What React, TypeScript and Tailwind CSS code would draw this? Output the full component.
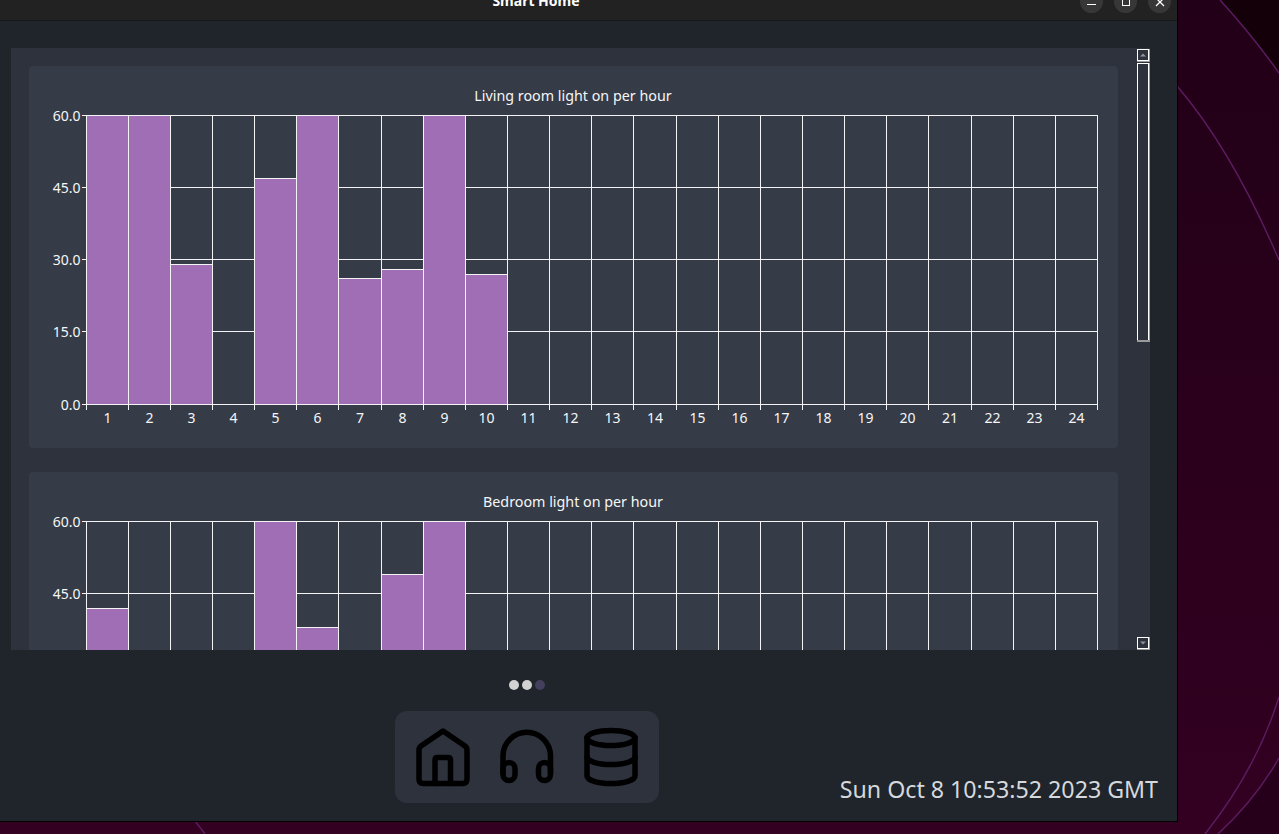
const hours = Array.from({ length: 24 }, (_, i) => i + 1);
const yTicks = [60, 45, 30, 15, 0];
const rowH = 289 / 60;

// pixel columns of the grid, relative to the left of the plot
const gridX = [0, 42, 84, 126, 168, 210, 252, 295, 337, 379, 421, 463, 505, 547, 590, 632, 674, 716, 758, 800, 842, 885, 927, 969, 1011];

const charts = [
  { title: 'Living room light on per hour', values: [60, 60, 29, 0, 47, 60, 26.1, 28, 60, 27] },
  { title: 'Bedroom light on per hour', values: [42, 0, 0, 0, 60, 38, 0, 49, 60] },
];

function HourChart({ title, values }: { title: string; values: number[] }) {
  const xAt = (i: number) => 57.5 + gridX[i];
  const gridY = (v: number) => 49.5 + Math.floor((60 - v) * rowH);
  const barY = (v: number) => 49.5 + Math.round((60 - v) * rowH);

  return (
    <div className="h-[382px] w-[1089px] shrink-0 rounded bg-[#353b47]">
      <svg width="1089" height="382" shapeRendering="crispEdges" className="block font-['Noto_Sans',sans-serif] text-[14px]">
        <text x="544" y="34.5" textAnchor="middle" fill="#f6f6f6" className="text-[14.3px]">
          {title}
        </text>
        {yTicks.map((t) => (
          <g key={t}>
            <line x1={53} x2={1068.5} y1={gridY(t)} y2={gridY(t)} stroke="#f4f4f4" />
            <text x="51.5" y={gridY(t) + 5} textAnchor="end" fill="#f6f6f6">
              {t.toFixed(1)}
            </text>
          </g>
        ))}
        {gridX.map((_, i) => (
          <line key={i} x1={xAt(i)} x2={xAt(i)} y1={49.5} y2={343.5} stroke="#f4f4f4" />
        ))}
        {hours.map((h, i) => (
          <text key={h} x={(xAt(i) + xAt(i + 1)) / 2} y="357" textAnchor="middle" fill="#f6f6f6">
            {h}
          </text>
        ))}
        {values.map((v, i) =>
          v > 0 ? (
            <rect
              key={i}
              x={xAt(i)}
              y={barY(v)}
              width={xAt(i + 1) - xAt(i)}
              height={barY(0) - barY(v)}
              fill="#a06eb4"
              stroke="#f4f4f4"
            />
          ) : null
        )}
      </svg>
    </div>
  );
}

function ScrollArrow({ up }: { up?: boolean }) {
  return (
    <div className="flex h-[13px] w-[13px] justify-start border-r border-b border-[#9a9a9a]">
      <div className="flex h-[12px] w-[12px] items-center justify-center border border-white">
        <svg width="6" height="4" viewBox="0 0 6 4">
          <path d={up ? 'M3 0.5 L6 3.5 H0 Z' : 'M3 3.5 L6 0.5 H0 Z'} fill="#8f939b" />
        </svg>
      </div>
    </div>
  );
}

function Scrollbar() {
  return (
    <div className="flex h-full w-[13px] shrink-0 flex-col pt-px">
      <ScrollArrow up />
      <div className="mt-px flex h-[279px] w-[13px] border-r border-b-2 border-[#9a9a9a]">
        <div className="h-full w-[12px] border border-b-0 border-white" />
      </div>
      <div className="flex-1" />
      <ScrollArrow />
    </div>
  );
}

function HomeIcon() {
  return (
    <svg width="64" height="64" viewBox="0 0 64 64" fill="none" stroke="#000" strokeWidth="5.5" strokeLinecap="round" strokeLinejoin="round">
      <path d="M8 25 Q8 22.5 10 21 L32 6 L54 21 Q56 22.5 56 25 V54 Q56 58.5 52 58.5 H12 Q8 58.5 8 54 Z" />
      <path d="M24 58.5 V35 Q24 32.5 26.5 32.5 H37 Q39.5 32.5 39.5 35 V58.5" />
    </svg>
  );
}

function HeadphonesIcon() {
  return (
    <svg width="64" height="64" viewBox="0 0 64 64" fill="none" stroke="#000" strokeWidth="5.5" strokeLinecap="round" strokeLinejoin="round">
      <path d="M8 48 V31 a23.75 23.75 0 0 1 47.5 0 V48" />
      <rect x="8" y="37.5" width="12" height="18" rx="6" />
      <rect x="43.5" y="37.5" width="12" height="18" rx="6" />
    </svg>
  );
}

function DatabaseIcon() {
  return (
    <svg width="64" height="64" viewBox="0 0 64 64" fill="none" stroke="#000" strokeWidth="5.5" strokeLinecap="round" strokeLinejoin="round">
      <ellipse cx="32" cy="13" rx="24" ry="7.5" />
      <path d="M8 13 V51 A24 7.5 0 0 0 56 51 V13" />
      <path d="M8 32 A24 7.5 0 0 0 56 32" />
    </svg>
  );
}

function Wallpaper() {
  return (
    <svg width="1279" height="834" className="absolute inset-0" fill="none">
      <path d="M1220 0 Q1252 35 1279 73 V0 Z" fill="#130009" />
      <path d="M1218 834 Q1255 800 1279 758 V834 Z" fill="#26001a" />
      <g stroke="#5c1b60" strokeWidth="1.5">
        <path d="M1220 0 Q1252 35 1279 73" />
        <path d="M1177 86 Q1232 150 1279 260" />
        <path d="M1205 834 Q1256 770 1279 697" />
        <path d="M1218 834 Q1255 800 1279 758" />
        <path d="M195 821 L205 834" />
      </g>
    </svg>
  );
}

function WindowButton({ children }: { children: React.ReactNode }) {
  return (
    <div className="-mt-[10px] flex h-[23px] w-[23px] items-end justify-center rounded-full bg-[#373737]">
      {children}
    </div>
  );
}

export default function App() {
  return (
    <div className="relative h-[834px] w-[1279px] overflow-hidden bg-linear-to-b from-[#220017] to-[#330021] font-['Noto_Sans',sans-serif]">
      <Wallpaper />

      {/* app window */}
      <div className="absolute left-0 top-0 flex h-[822px] w-[1178px] flex-col border-b border-r border-black bg-[#1f252b]">
        <div className="relative flex h-[21px] shrink-0 items-start justify-end gap-[11px] overflow-hidden border-b border-[#15181c] bg-[#222222] pr-[6px]">
          <div className="absolute inset-x-0 -top-[9px] pr-[105px] text-center text-[14px] font-bold leading-[20px] text-white">Smart Home</div>
          <WindowButton>
            <div className="mb-[8px] h-[1.5px] w-[9px] bg-white" />
          </WindowButton>
          <WindowButton>
            <div className="mb-[7px] h-[9px] w-[8px] border border-white" />
          </WindowButton>
          <WindowButton>
            <svg width="10" height="10" viewBox="0 0 10 10" className="mb-[6px]" stroke="#fff" strokeWidth="1.3">
              <path d="M1 1 L9 9 M9 1 L1 9" />
            </svg>
          </WindowButton>
        </div>

        <div className="ml-[11px] mt-[27px] flex h-[602px] w-[1139px] shrink-0 bg-[#2d323d]">
          <div className="flex h-full w-[1126px] flex-col gap-[24px] overflow-hidden pl-[18px] pt-[18px]">
            {charts.map((c) => (
              <HourChart key={c.title} title={c.title} values={c.values} />
            ))}
          </div>
          <Scrollbar />
        </div>

        <div className="mt-[30px] flex w-[1054px] justify-center gap-[3.4px]">
          <div className="h-[10px] w-[10px] rounded-full bg-[#d2d2d2]" />
          <div className="h-[10px] w-[10px] rounded-full bg-[#d2d2d2]" />
          <div className="h-[10px] w-[10px] rounded-full bg-[#453f5e]" />
        </div>

        <div className="mt-[21px] flex items-end justify-between pl-[395px] pr-[19px]">
          <div className="flex h-[92px] w-[264px] items-center gap-[20px] rounded-xl bg-[#2d323d] px-[16px]">
            <HomeIcon />
            <HeadphonesIcon />
            <DatabaseIcon />
          </div>
          <div className="mb-[-3px] text-[23.2px] leading-[33px] text-[#d5d8dc]">Sun Oct 8 10:53:52 2023 GMT</div>
        </div>
      </div>
    </div>
  );
}
